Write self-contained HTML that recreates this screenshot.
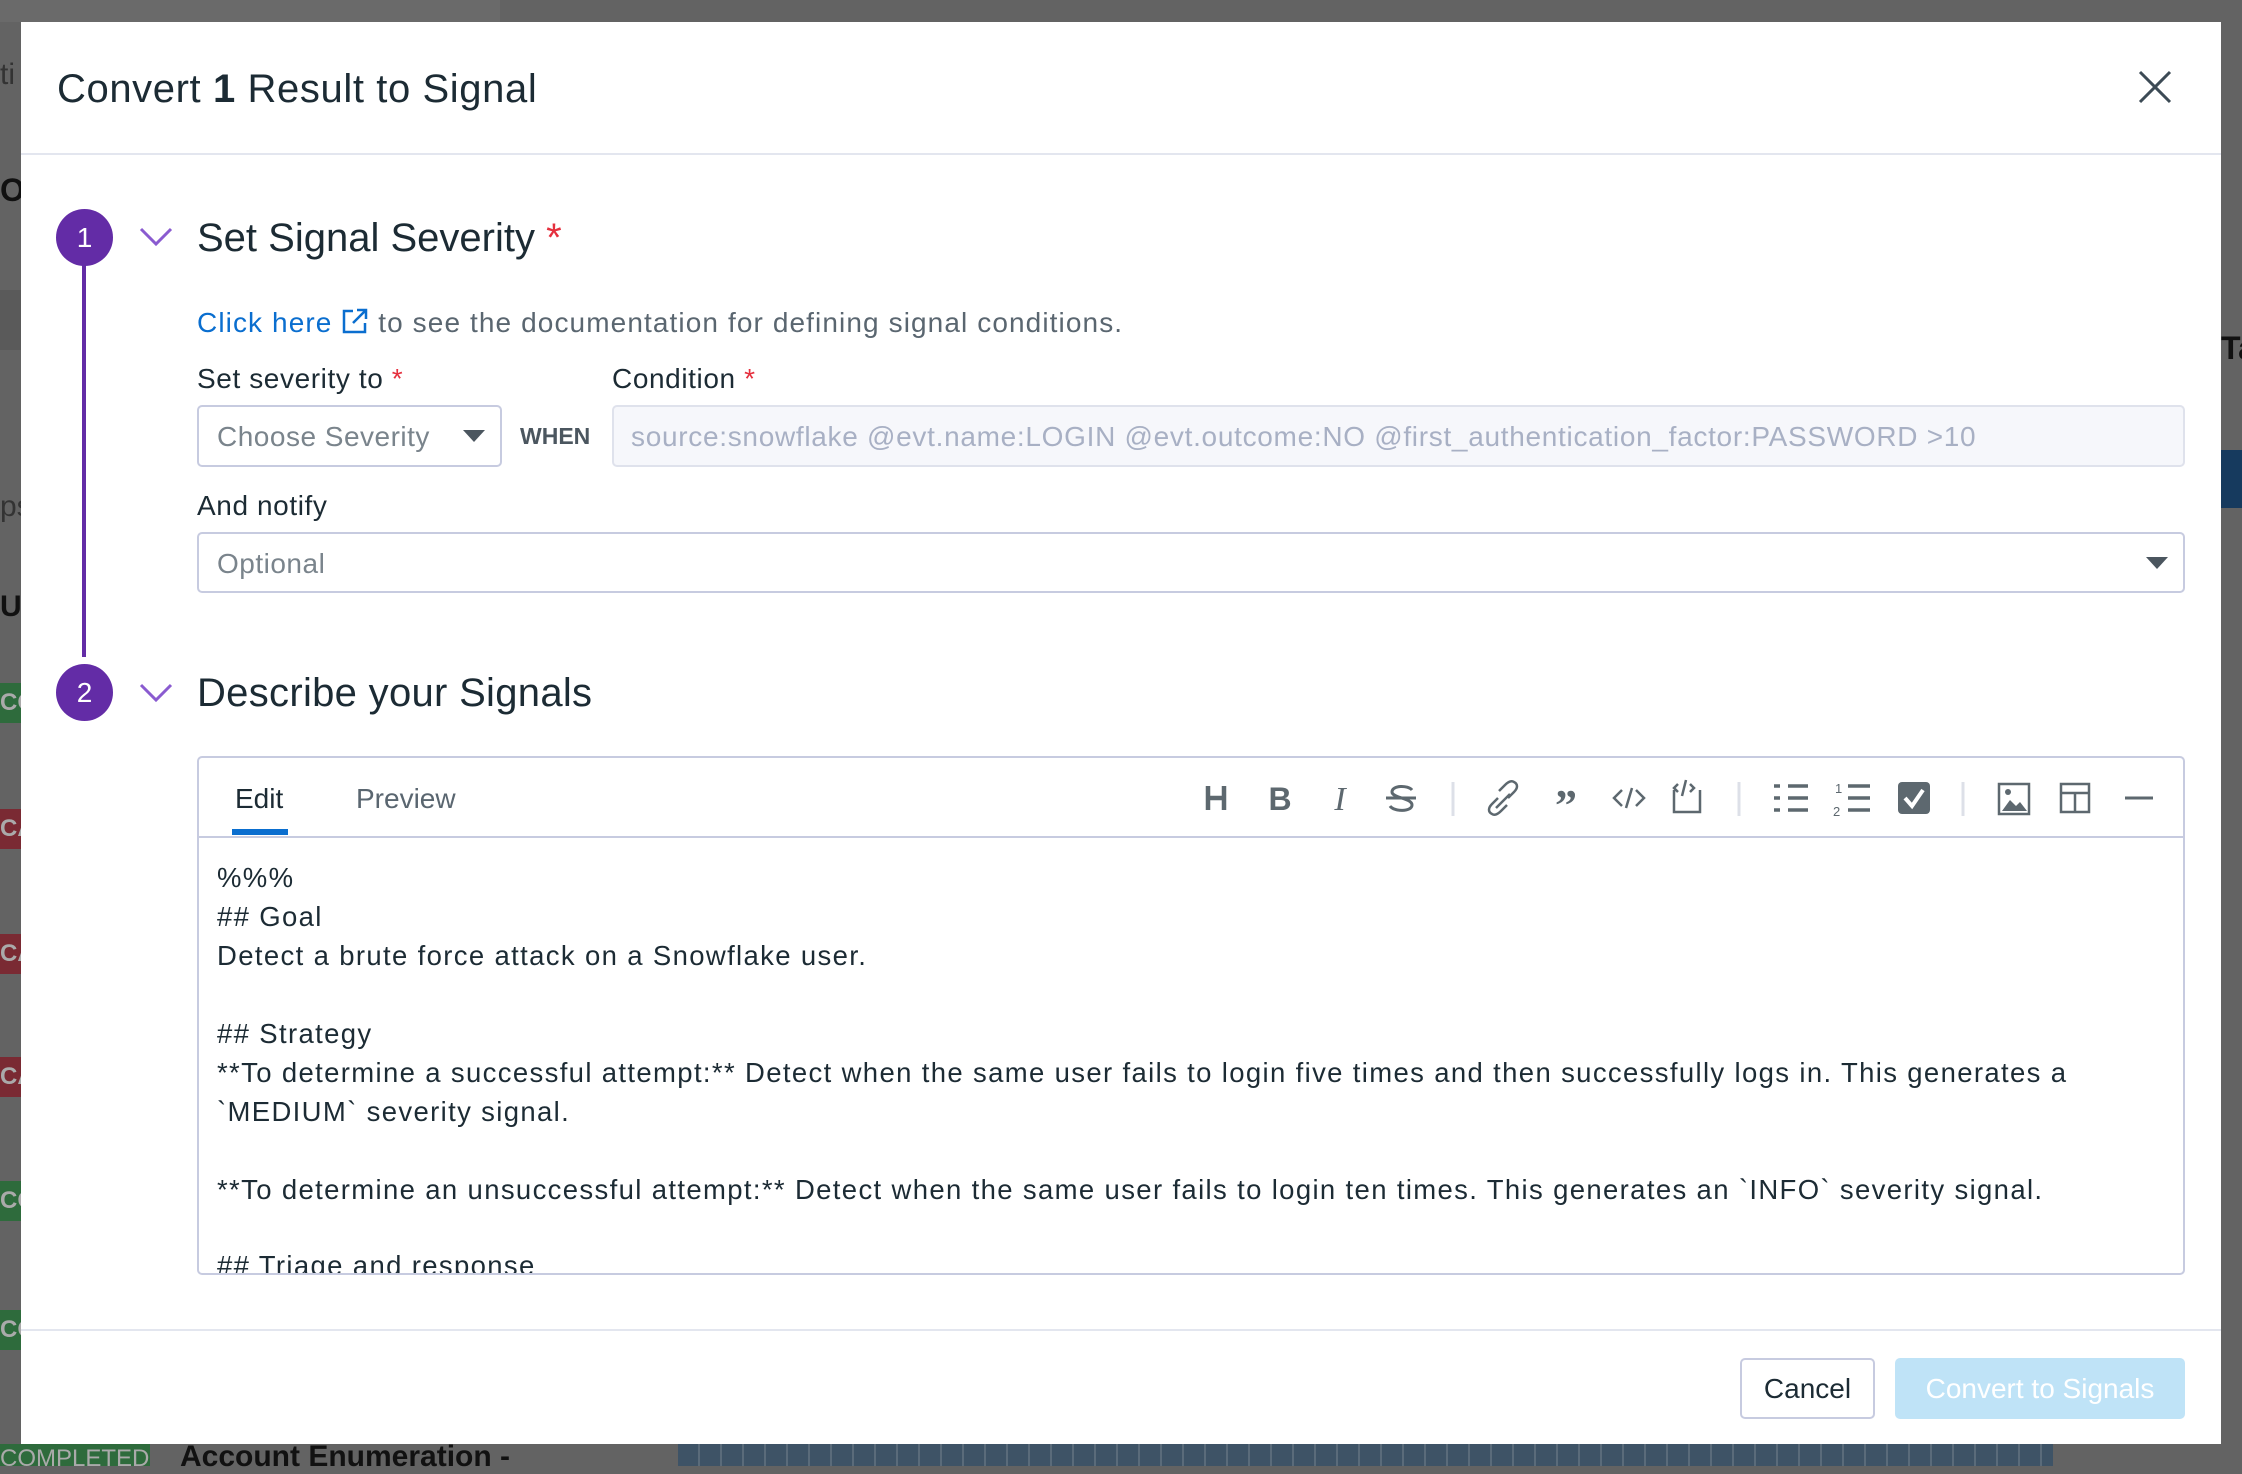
<!DOCTYPE html>
<html><head><meta charset="utf-8">
<style>
*{box-sizing:border-box;margin:0;padding:0}
body{width:2242px;height:1466px;overflow:hidden;background:#636363;font-family:"Liberation Sans",sans-serif;position:relative;color:#1c2b34}
.abs{position:absolute}
.badge{position:absolute;left:0;width:21px;height:40px;color:#aaa;font-size:24px;font-weight:bold;line-height:40px;overflow:hidden;white-space:nowrap}
.g{background:#2e6b3c}.r{background:#7a2a33}
.modal{position:absolute;left:21px;top:22px;width:2200px;height:1422px;background:#fff}
.t{position:absolute;white-space:nowrap}
.lbl{font-size:28px;color:#1c2b34;letter-spacing:0.6px}
.star{color:#e5303e}
.box{position:absolute;border:2px solid #c7cbe0;border-radius:5px}
.ed{position:absolute;left:217px;top:858px;font-size:27.5px;line-height:39px;color:#1c2b34;white-space:pre;letter-spacing:1.35px}
</style></head><body>
<div class="abs" style="left:0;top:0;width:500px;height:22px;background:#6a6a6a"></div>
<div class="abs" style="left:0;top:55px;width:21px;height:40px;color:#333;font-size:30px;line-height:40px;overflow:hidden">ti</div>
<div class="abs" style="left:0;top:170px;width:21px;height:40px;color:#111;font-size:32px;font-weight:bold;line-height:40px;overflow:hidden">O</div>
<div class="abs" style="left:0;top:290px;width:21px;height:60px;background:#5a5a5a"></div>
<div class="abs" style="left:0;top:490px;width:21px;height:40px;color:#333;font-size:30px;overflow:hidden">ps</div>
<div class="abs" style="left:0;top:590px;width:21px;height:40px;color:#111;font-size:30px;font-weight:bold;overflow:hidden">U</div>
<div class="badge g" style="top:683px">CO</div>
<div class="badge r" style="top:809px">CA</div>
<div class="badge r" style="top:934px">CA</div>
<div class="badge r" style="top:1057px">CA</div>
<div class="badge g" style="top:1181px">CO</div>
<div class="badge g" style="top:1310px">CO</div>
<div class="abs" style="left:0;top:1444px;width:150px;height:22px;background:#2e6b3c;color:#aaa;font-size:24px;line-height:30px;overflow:hidden;white-space:nowrap">COMPLETED</div>
<div class="abs" style="left:180px;top:1440px;color:#111;font-size:30px;font-weight:bold;white-space:nowrap">Account Enumeration -</div>
<div class="abs" style="left:678px;top:1444px;width:1375px;height:22px;background:repeating-linear-gradient(90deg,#3e5366 0 20px,#5a6b7a 20px 22px)"></div>
<div class="abs" style="left:2221px;top:330px;color:#111;font-size:32px;font-weight:bold">Ta</div>
<div class="abs" style="left:2221px;top:450px;width:21px;height:58px;background:#163a5e"></div>

<div class="modal"></div>
<div class="t" style="left:57px;top:67px;font-size:40px;color:#1c2b34;letter-spacing:0.6px">Convert <b>1</b> Result to Signal</div>
<svg class="abs" style="left:2138px;top:70px" width="34" height="34" viewBox="0 0 34 34"><path d="M2 2L32 32M32 2L2 32" stroke="#3c4a55" stroke-width="3"/></svg>
<div class="abs" style="left:21px;top:153px;width:2200px;height:2px;background:#e3e6ef"></div>

<div class="abs" style="left:82px;top:265px;width:4px;height:392px;background:#632ca6"></div>
<div class="abs" style="left:56px;top:209px;width:57px;height:57px;border-radius:50%;background:#632ca6;color:#fff;font-size:28px;text-align:center;line-height:57px">1</div>
<svg class="abs" style="left:139px;top:227px" width="34" height="20"><path d="M2 2L17 17L32 2" stroke="#8a5bd0" stroke-width="3" fill="none"/></svg>
<div class="t" style="left:197px;top:216px;font-size:40px">Set Signal Severity <span class="star">*</span></div>
<div class="t" style="left:197px;top:307px;font-size:28px;color:#5a6670;letter-spacing:1.1px"><span style="color:#0a6ecf">Click here</span> <svg width="28" height="28" viewBox="0 0 28 28" style="vertical-align:-3px"><path d="M12 4H3V25H24V16M16 3H25V12M25 3L12 16" stroke="#0a6ecf" stroke-width="2.5" fill="none"/></svg> to see the documentation for defining signal conditions.</div>
<div class="t lbl" style="left:197px;top:363px">Set severity to <span class="star">*</span></div>
<div class="t lbl" style="left:612px;top:363px">Condition <span class="star">*</span></div>
<div class="box" style="left:197px;top:405px;width:305px;height:62px"></div>
<div class="t" style="left:217px;top:421px;font-size:28px;color:#7a848c;letter-spacing:0.5px">Choose Severity</div>
<svg class="abs" style="left:463px;top:430px" width="22" height="14"><path d="M0 0H22L11 12Z" fill="#4b565f"/></svg>
<div class="t" style="left:520px;top:423px;font-size:23px;font-weight:bold;color:#4b565f">WHEN</div>
<div class="box" style="left:612px;top:405px;width:1573px;height:62px;background:#f6f7fb;border-color:#dfe2ec"></div>
<div class="t" style="left:631px;top:421px;font-size:28px;color:#a8b0c4;letter-spacing:0.7px">source:snowflake @evt.name:LOGIN @evt.outcome:NO @first_authentication_factor:PASSWORD &gt;10</div>
<div class="t lbl" style="left:197px;top:490px">And notify</div>
<div class="box" style="left:197px;top:532px;width:1988px;height:61px"></div>
<div class="t" style="left:217px;top:548px;font-size:28px;color:#7a848c;letter-spacing:0.5px">Optional</div>
<svg class="abs" style="left:2146px;top:557px" width="22" height="14"><path d="M0 0H22L11 12Z" fill="#4b565f"/></svg>

<div class="abs" style="left:56px;top:664px;width:57px;height:57px;border-radius:50%;background:#632ca6;color:#fff;font-size:28px;text-align:center;line-height:57px">2</div>
<svg class="abs" style="left:139px;top:683px" width="34" height="20"><path d="M2 2L17 17L32 2" stroke="#8a5bd0" stroke-width="3" fill="none"/></svg>
<div class="t" style="left:197px;top:671px;font-size:40px;letter-spacing:0.3px">Describe your Signals</div>

<div class="box" style="left:197px;top:756px;width:1988px;height:519px;border-color:#c7cbe0"></div>
<div class="abs" style="left:199px;top:836px;width:1984px;height:2px;background:#c7cbe0"></div>
<div class="t" style="left:235px;top:783px;font-size:28px;color:#1c2b34">Edit</div>
<div class="abs" style="left:232px;top:829px;width:56px;height:6px;background:#0a6ecf"></div>
<div class="t" style="left:356px;top:783px;font-size:28px;color:#5a6670">Preview</div>

<svg class="abs" style="left:1190px;top:778px" width="980" height="40" viewBox="0 0 980 40" fill="none" stroke="#5d686f">
 <g stroke-width="4.5"><path d="M18 8V32M34 8V32M18 20H34"/></g>
 <text x="90" y="32" font-family="Liberation Sans" font-weight="bold" font-size="32" fill="#5d686f" stroke="none" text-anchor="middle">B</text>
 <text x="150" y="32" font-family="Liberation Serif" font-style="italic" font-size="34" fill="#5d686f" stroke="none" text-anchor="middle">I</text>
 <path d="M222 12C218 7 202 7 202 14C202 20 222 20 222 27C222 34 204 34 200 28M196 20H226" stroke-width="3"/>
 <path d="M263 4V38" stroke="#dde0e8" stroke-width="3"/>
 <path d="M308 20L302 26C298 30 298 34 302 36C305 38 308 36 311 33L317 27M318 20L324 14C328 10 328 6 324 4C321 2 318 4 315 7L309 13M306 30L320 16" stroke-width="2.5"/>
 <text x="376" y="42" font-family="Liberation Serif" font-weight="bold" font-size="44" fill="#5d686f" stroke="none" text-anchor="middle">”</text>
 <path d="M432 12L424 20L432 28M446 12L454 20L446 28M442 10L436 30" stroke-width="2.5"/>
 <path d="M484 12V34H510V12M488 6L484 10L488 14M500 6L504 10L500 14M496 2L492 18" stroke-width="2.5"/>
 <path d="M549 4V38" stroke="#dde0e8" stroke-width="3"/>
 <path d="M584 8H590M584 20H590M584 32H590M598 8H618M598 20H618M598 32H618" stroke-width="3.5"/>
 <path d="M658 8H680M658 20H680M658 32H680" stroke-width="3.5"/>
 <text x="645" y="15" font-family="Liberation Sans" font-size="13" fill="#5d686f" stroke="none">1</text>
 <text x="643" y="38" font-family="Liberation Sans" font-size="13" fill="#5d686f" stroke="none">2</text>
 <rect x="708" y="4" width="32" height="32" rx="4" fill="#5d686f" stroke="none"/>
 <path d="M715 20L722 28L733 12" stroke="#fff" stroke-width="4"/>
 <path d="M773 4V38" stroke="#dde0e8" stroke-width="3"/>
 <rect x="809" y="6" width="30" height="30" stroke-width="2.5"/>
 <path d="M812 33L820 22L826 28L830 24L837 33Z" fill="#5d686f" stroke="none"/><circle cx="818" cy="14" r="3" fill="#5d686f" stroke="none"/>
 <rect x="871" y="6" width="28" height="28" stroke-width="2.5"/><path d="M871 15H899M885 15V34" stroke-width="2.5"/>
 <path d="M935 20H963" stroke-width="3"/>
</svg>

<div class="ed">%%%
## Goal
Detect a brute force attack on a Snowflake user.

## Strategy
**To determine a successful attempt:** Detect when the same user fails to login five times and then successfully logs in. This generates a
`MEDIUM` severity signal.

**To determine an unsuccessful attempt:** Detect when the same user fails to login ten times. This generates an `INFO` severity signal.
</div>
<div class="abs" style="left:199px;top:1250px;width:1984px;height:23px;overflow:hidden"><div class="t" style="left:18px;top:0px;font-size:27.5px;letter-spacing:1.35px;color:#1c2b34">## Triage and response</div></div>

<div class="abs" style="left:21px;top:1329px;width:2200px;height:2px;background:#e3e6ef"></div>
<div class="abs" style="left:1740px;top:1358px;width:135px;height:61px;border:2px solid #c7cbe0;border-radius:5px;font-size:28px;text-align:center;line-height:57px;color:#1c2b34">Cancel</div>
<div class="abs" style="left:1895px;top:1358px;width:290px;height:61px;background:#bfe3f7;border-radius:5px;font-size:28px;text-align:center;line-height:61px;color:#fff">Convert to Signals</div>
</body></html>
